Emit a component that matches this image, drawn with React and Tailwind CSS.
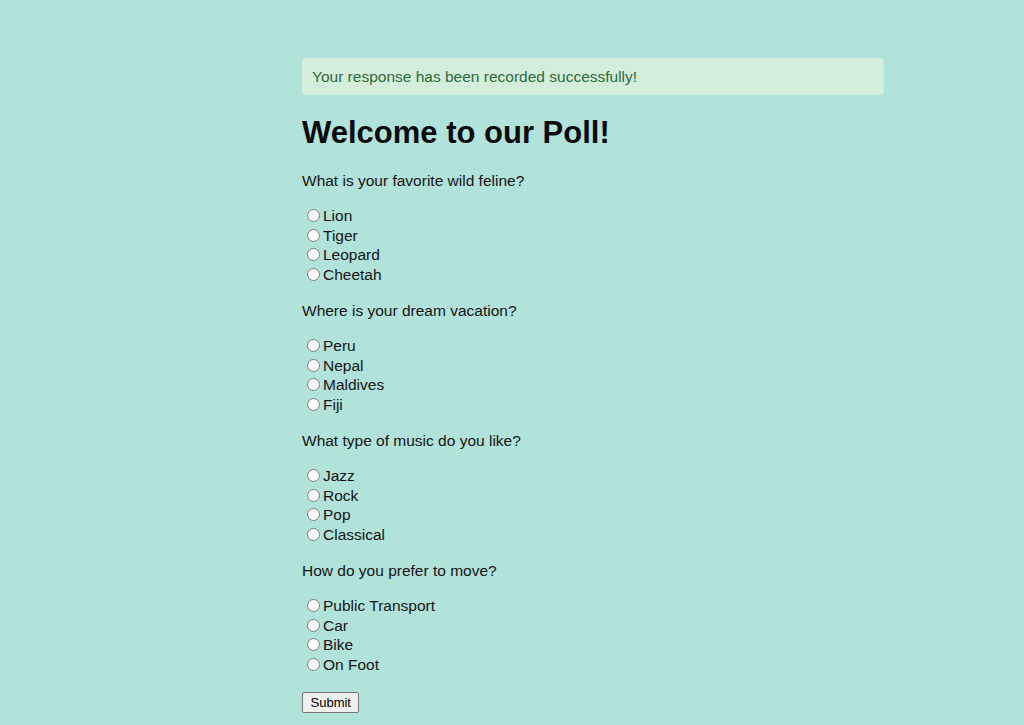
import React from "react";

const questions = [
  { q: "What is your favorite wild feline?", name: "feline", opts: ["Lion", "Tiger", "Leopard", "Cheetah"] },
  { q: "Where is your dream vacation?", name: "vacation", opts: ["Peru", "Nepal", "Maldives", "Fiji"] },
  { q: "What type of music do you like?", name: "music", opts: ["Jazz", "Rock", "Pop", "Classical"] },
  { q: "How do you prefer to move?", name: "move", opts: ["Public Transport", "Car", "Bike", "On Foot"] },
];

export default function App() {
  return (
    <div className="min-h-[725px] w-full bg-[#b1e3da] text-[#111] font-['Liberation_Sans',Arial,sans-serif]">
      <div className="ml-[302px] w-[582px] pt-[58px] pb-[12px]">
        <div className="h-[37px] rounded-[4px] bg-[#d3eedb] text-[#2e6b3c] text-[15.5px] pl-[10px] flex items-center">
          Your response has been recorded successfully!
        </div>
        <h1 className="mt-[19px] text-[31px] leading-[38px] font-bold text-[#0a0a0a]">Welcome to our Poll!</h1>
        <form className="mt-[19px]">
          {questions.map((g, i) => (
            <div key={g.name} className={i === 0 ? "" : "mt-[17px]"}>
              <p className="text-[15.5px] leading-[20px] text-[#151515]">{g.q}</p>
              <div className="mt-[15px]">
                {g.opts.map((o) => (
                  <label key={o} className="flex items-center h-[19.5px] text-[15.5px] text-[#151515]">
                    <input type="radio" name={g.name} className="ml-[5px] mr-[3px] w-[13px] h-[13px]" />
                    <span>{o}</span>
                  </label>
                ))}
              </div>
            </div>
          ))}
          <button type="button" className="mt-[18px] h-[21px] px-[7.5px] bg-[#efefef] border border-[#767676] rounded-[2px] text-[13px] leading-[19px] text-black">
            Submit
          </button>
        </form>
      </div>
    </div>
  );
}
